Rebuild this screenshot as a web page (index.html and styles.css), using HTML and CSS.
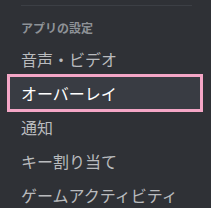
FILE: index.html
```html
<!DOCTYPE html>
<html lang="ja">
<head>
<meta charset="utf-8">
<link rel="stylesheet" href="styles.css">
</head>
<body>
<nav class="sidebar">
  <div class="separator"></div>
  <div class="header">アプリの設定</div>
  <div class="item">音声・ビデオ</div>
  <div class="item selected">オーバーレイ</div>
  <div class="item">通知</div>
  <div class="item">キー割り当て</div>
  <div class="item">ゲームアクティビティ</div>
</nav>
</body>
</html>
```
FILE: styles.css
```css
html, body {
  margin: 0;
  padding: 0;
  background: #2f3136;
  width: 211px;
  height: 208px;
  overflow: hidden;
}
.sidebar {
  display: flex;
  flex-direction: column;
  padding: 5px 11px 0 10px;
  font-family: "Noto Sans CJK JP", "Noto Sans", sans-serif;
}
.separator {
  height: 1px;
  background: #3c3f45;
  margin: 0 8px 8px 11px;
}
.header {
  padding: 6px 11px 7px;
  font-size: 12px;
  line-height: 16px;
  font-weight: 700;
  color: #8e9297;
}
.item {
  height: 32px;
  box-sizing: border-box;
  padding: 0 11px;
  margin-bottom: 2px;
  display: flex;
  align-items: center;
  font-size: 16px;
  line-height: 20px;
  color: #b9bbbe;
  border-radius: 4px;
}
.item.selected {
  background: #393c43;
  color: #ffffff;
  border-radius: 0;
  outline: 3px solid #f4a6c6;
}
```
